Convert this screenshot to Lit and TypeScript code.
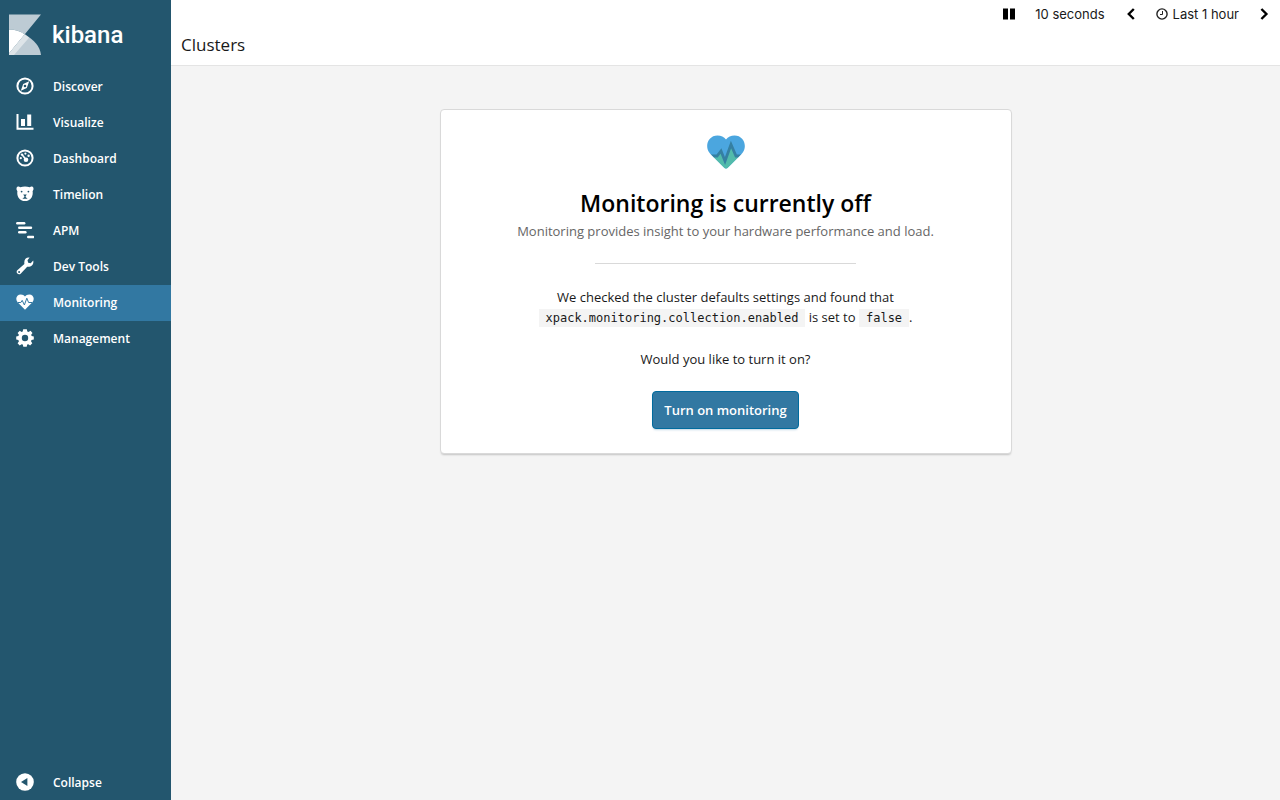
import { LitElement, html, css, svg } from "lit";
import { customElement, state } from "lit/decorators.js";

const icons = {
  discover: svg`
    <circle cx="9" cy="9" r="7.6" fill="none" stroke="#fff" stroke-width="2"/>
    <path fill-rule="evenodd" fill="#fff" d="M13.2 4.2 L10.8 11 L4.8 13.8 L7.2 7 Z M9 7.7 A1.3 1.3 0 1 0 9 10.3 A1.3 1.3 0 1 0 9 7.7 Z"/>`,
  visualize: svg`
    <path fill="#fff" d="M.5 1H2.5V14.8H17.5V16.8H.5Z M5 6H9V13H5Z M11.2 1.5H15.2V13H11.2Z"/>`,
  dashboard: svg`
    <circle cx="9" cy="9" r="7.6" fill="none" stroke="#fff" stroke-width="2"/>
    <path stroke="#fff" stroke-width="1.6" d="M6.2 5.8L9.8 10.4"/>
    <g fill="#fff"><circle cx="10" cy="10.8" r="2.3"/><circle cx="6" cy="5.6" r="1.2"/><circle cx="9.4" cy="4.6" r="1.1"/>
    <circle cx="12.6" cy="6.8" r="1.2"/><circle cx="4.8" cy="9.2" r="1.1"/></g>`,
  timelion: svg`
    <path fill="#fff" d="M.5 3.4C.6 1.6 2.8 1 4.2 2.2C7.4 1.3 10.6 1.3 13.8 2.2C15.2 1 17.4 1.6 17.5 3.4C17.6 4.8 17 5.4 16.6 6C17 8.6 16.6 10.8 15.6 12.4C13.8 15 11.6 16 9 16C6.4 16 4.2 15 2.4 12.4C1.4 10.8 1 8.6 1.4 6C1 5.4.4 4.8.5 3.4Z"/>
    <g fill="#23566e"><circle cx="5.6" cy="6.6" r=".9"/><circle cx="12.4" cy="6.6" r=".9"/>
    <path d="M7.2 9.4H10.8L9.6 11.2V12L11.6 13.8H6.4L8.4 12V11.2Z"/></g>`,
  apm: svg`
    <g stroke="#fff" stroke-width="2.4" stroke-linecap="round"><path d="M1.3 2.2H8.2"/><path d="M3.2 6.8H15"/><path d="M3.2 11.2H9.4"/><path d="M12.2 16H17.2"/></g>`,
  devtools: svg`
    <path fill="#fff" fill-rule="evenodd" d="M13.6.6L11.5 3.3L12.2 5.7L14.7 6.3L17.2 3.6C18.1 7.3 15.4 10.2 11.2 9.7L4.9 16.4C3.8 17.6 2.4 17.6 1.4 16.6C.3 15.5.4 14.1 1.6 13.1L8.4 7C7.7 3 9.8.2 13.6.6ZM3.1 14A1 1 0 1 0 3.1 16A1 1 0 1 0 3.1 14Z"/>`,
  monitoring: svg`
    <path fill="#fff" d="M9 16.8L1.6 9.3C-1.2 5.7.7 1.4 4.8 1.4C6.6 1.4 8.1 2.3 9 3.4C9.9 2.3 11.4 1.4 13.2 1.4C17.3 1.4 19.2 5.7 16.4 9.3Z"/>
    <path fill="none" stroke="#3278a2" stroke-width="1" d="M2 9.5H4.8L6.2 7.4L8.4 12L10.8 5.2L12.6 9.5H16"/>`,
  management: svg`
    <path fill="#fff" fill-rule="evenodd" d="M7.2.3H10.8L11.3 2.6L12.5 3.1L14.5 1.8L16.5 4L15.2 5.8L15.6 7L17.8 7.4V10.6L15.5 11L15 12.3L16.3 14.3L14.1 16.4L12.3 15.2L11.2 15.6L10.7 17.8H7.3L6.8 15.6L5.6 15.2L3.7 16.4L1.6 14.3L2.9 12.4L2.4 11L.2 10.6V7.4L2.4 7L2.9 5.7L1.6 3.9L3.8 1.7L5.6 3L6.7 2.6Z M9 5.8A3.2 3.2 0 1 0 9 12.2A3.2 3.2 0 1 0 9 5.8Z"/>`,
  collapse: svg`
    <circle cx="9" cy="9" r="8.8" fill="#fff"/><path fill="#23566e" d="M11.4 5V13L5 9Z"/>`,
};

type IconName = keyof typeof icons;

const items: { label: string; icon: IconName }[] = [
  { label: "Discover", icon: "discover" },
  { label: "Visualize", icon: "visualize" },
  { label: "Dashboard", icon: "dashboard" },
  { label: "Timelion", icon: "timelion" },
  { label: "APM", icon: "apm" },
  { label: "Dev Tools", icon: "devtools" },
  { label: "Monitoring", icon: "monitoring" },
  { label: "Management", icon: "management" },
];

@customElement("kibana-nav")
export class KibanaNav extends LitElement {
  @state() private current = "Monitoring";

  static styles = css`
    :host {
      display: flex;
      flex-direction: column;
      background: #23566e;
      color: #fff;
      font: 600 12px/20px "Open Sans", sans-serif;
    }
    .brand {
      display: flex;
      align-items: center;
      gap: 11px;
      height: 69px;
      padding-left: 9px;
      box-sizing: border-box;
      color: inherit;
      text-decoration: none;
    }
    .mark { display: block; width: 32px; height: 42px; }
    .word { font: 500 24px/32px Roboto, sans-serif; }
    .list { list-style: none; margin: 0; padding: 0; flex: 1; }
    .item {
      display: flex;
      align-items: center;
      gap: 19px;
      width: 100%;
      height: 36px;
      box-sizing: border-box;
      padding: 0 0 0 16px;
      border: 0;
      background: none;
      color: inherit;
      font: inherit;
      text-align: left;
      text-decoration: none;
      cursor: pointer;
    }
    .current { background: #3278a2; }
    .toggle { height: 34px; }
    .icon { display: block; width: 18px; height: 18px; margin-bottom: 3px; }
  `;

  render() {
    return html`
      <a class="brand" href="#home">
        <svg class="mark" viewBox="0 0 32 42" aria-hidden="true">
          <path fill="#bdcbd4" d="M0 0.5H32L15.8 20.2C11.5 17 6 15.4 0 15.4Z" />
          <path fill="#fff" d="M0 15.4C6 15.4 11.5 17 15.8 20.2L0 39.5Z" />
          <path fill="#bdcbd4" d="M15.8 20.2C25 26 31 32 32 41H0V39.5Z" />
          <path fill="#dde4e8" d="M15.8 20.2L20 23.8L5 41H0V39.5Z" />
        </svg>
        <span class="word">kibana</span>
      </a>
      <ul class="list">
        ${items.map(
          (item) => html`<li>
            <a
              class="item ${item.label === this.current ? "current" : ""}"
              href="#${item.icon}"
              @click=${() => (this.current = item.label)}
            >
              <svg class="icon" viewBox="0 0 18 18" aria-hidden="true">${icons[item.icon]}</svg>
              <span>${item.label}</span>
            </a>
          </li>`
        )}
      </ul>
      <button class="item toggle" type="button">
        <svg class="icon" viewBox="0 0 18 18" aria-hidden="true">${icons.collapse}</svg>
        <span>Collapse</span>
      </button>
    `;
  }
}

@customElement("app-root")
export class AppRoot extends LitElement {
  static styles = css`
    :host {
      display: grid;
      grid-template-columns: 171px minmax(0, 1fr);
      min-height: 100vh;
      background: #f4f4f4;
      color: #191919;
      font: 13px/20px "Open Sans", sans-serif;
    }
    .header {
      background: #fff;
      border-bottom: 1px solid #e4e4e4;
      padding-bottom: 9px;
    }
    .tools {
      display: flex;
      justify-content: flex-end;
      align-items: center;
      height: 28px;
      padding-right: 10px;
    }
    .tool {
      display: flex;
      align-items: center;
      gap: 5px;
      padding: 0;
      border: 0;
      background: none;
      color: inherit;
      font: 13px/20px Inter, sans-serif;
      cursor: pointer;
    }
    .pause, .rate { margin-right: 20px; }
    .prev, .range { margin-right: 19px; }
    .glyph { display: block; width: 12px; height: 12px; }
    .title { margin: 6px 10px 0; font-size: 17px; line-height: 22px; font-weight: 400; }
    .page { display: flex; justify-content: center; padding: 43px 16px; }
    .card {
      width: 100%;
      max-width: 572px;
      box-sizing: border-box;
      padding: 24px;
      border: 1px solid #d9d9d9;
      border-radius: 4px;
      background: #fff;
      box-shadow: 0 2px 2px -1px rgba(0, 0, 0, 0.2);
      text-align: center;
    }
    .heart { display: block; width: 38px; height: 36px; margin: 0 auto; }
    .heading { margin: 16px 0 0; font-size: 23px; line-height: 35px; font-weight: 600; color: #000; }
    .sub { margin: 0; color: #666; }
    .rule { width: 50%; height: 1px; margin: 22px auto 23px; border: 0; background: #d9d9d9; }
    .text { margin: 0 auto 22px; max-width: 400px; }
    .code { padding: 2px 7px; background: #f4f4f4; font: 12px/14px "DejaVu Sans Mono", monospace; }
    .action {
      display: block;
      height: 38px;
      margin: 0 auto;
      padding: 0 11px;
      border: 1px solid #006b9e;
      border-radius: 4px;
      background: #3278a2;
      color: #fff;
      font: 600 13px/20px "Open Sans", sans-serif;
      box-shadow: 0 2px 2px -1px rgba(50, 120, 162, 0.3);
      cursor: pointer;
    }
  `;

  render() {
    return html`
      <kibana-nav></kibana-nav>
      <main>
        <header class="header">
          <div class="tools">
            <button class="tool pause" type="button" aria-label="Pause">
              <svg class="glyph" viewBox="0 0 12 12"><path d="M0 .5H5V11.5H0ZM7 .5H12V11.5H7Z" /></svg>
            </button>
            <button class="tool rate" type="button">10 seconds</button>
            <button class="tool prev" type="button" aria-label="Earlier">
              <svg class="glyph" viewBox="0 0 12 12"><path fill="none" stroke="#000" stroke-width="2.4" d="M8.8 1L3.8 6L8.8 11" /></svg>
            </button>
            <button class="tool range" type="button">
              <svg class="glyph" viewBox="0 0 12 12">
                <circle cx="6" cy="6" r="5.1" fill="none" stroke="#222" stroke-width="1.4" />
                <path fill="none" stroke="#222" d="M6.5 3V6.5H4" />
              </svg>
              <span>Last 1 hour</span>
            </button>
            <button class="tool" type="button" aria-label="Later">
              <svg class="glyph" viewBox="0 0 12 12"><path fill="none" stroke="#000" stroke-width="2.4" d="M3.4 1L8.4 6L3.4 11" /></svg>
            </button>
          </div>
          <h1 class="title">Clusters</h1>
        </header>
        <div class="page">
          <section class="card">
            <svg class="heart" viewBox="0 0 38 36" aria-hidden="true">
              <defs>
                <clipPath id="heart-shape">
                  <path d="M19 34.5Q18 34.5 16.5 33L3 19.5C-3 12.5 1 1.5 10.5 1.5C14 1.5 17 3 19 5.5C21 3 24 1.5 27.5 1.5C37 1.5 41 12.5 35 19.5L21.5 33Q20 34.5 19 34.5Z" />
                </clipPath>
              </defs>
              <g clip-path="url(#heart-shape)">
                <rect width="38" height="36" fill="#4ba6df" />
                <path fill="#52bbab" d="M0 23H9.5L14 17L18.5 27L24 11L29 23H38V36H0Z" />
                <path fill="none" stroke="#3580a2" stroke-width="2.8" d="M0 22H10L14 17L18 27L24 10.5L29 22H38" />
              </g>
            </svg>
            <h2 class="heading">Monitoring is currently off</h2>
            <p class="sub">Monitoring provides insight to your hardware performance and load.</p>
            <hr class="rule" />
            <p class="text">
              We checked the cluster defaults settings and found that
              <code class="code">xpack.monitoring.collection.enabled</code> is set to
              <code class="code">false</code>.
            </p>
            <p class="text">Would you like to turn it on?</p>
            <button class="action" type="button">Turn on monitoring</button>
          </section>
        </div>
      </main>
    `;
  }
}
